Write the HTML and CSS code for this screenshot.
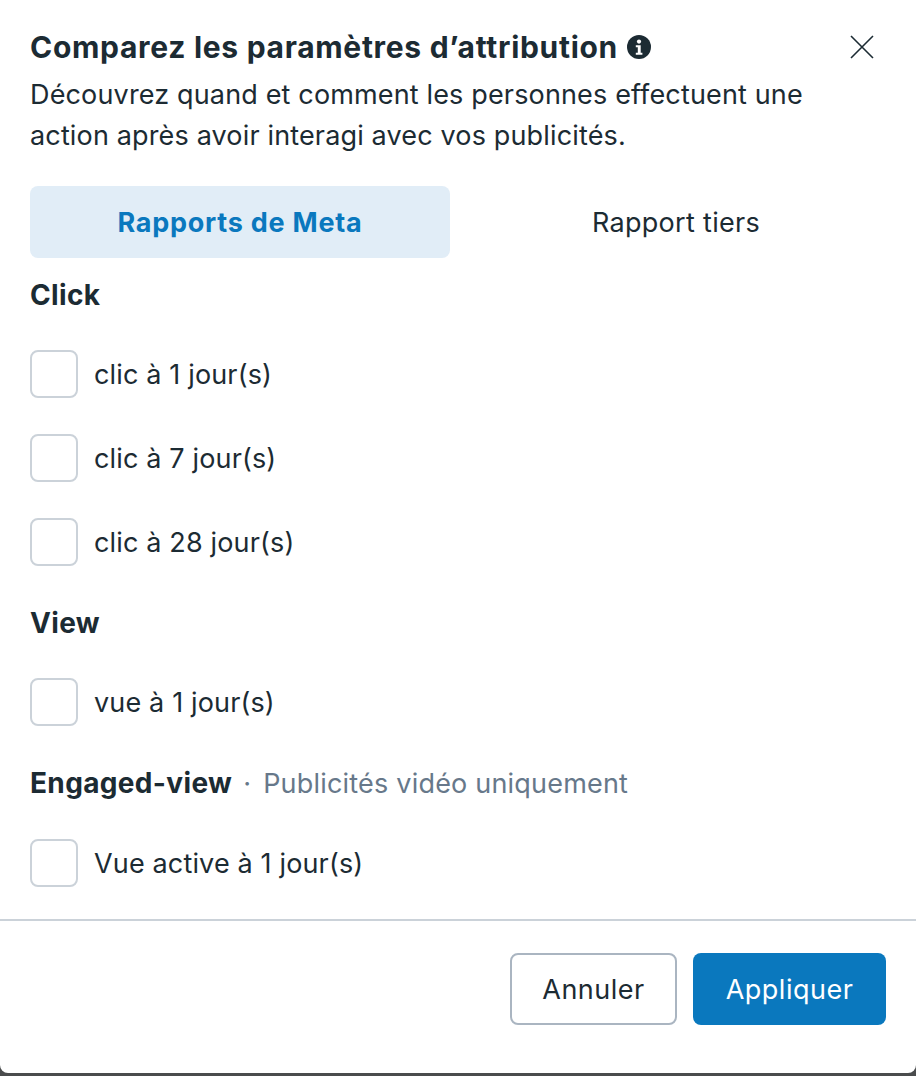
FILE: index.html
```html
<!DOCTYPE html>
<html lang="fr">
<head>
  <meta charset="UTF-8">
  <title>Comparez les paramètres d’attribution</title>
  <link rel="stylesheet" href="styles.css">
</head>
<body>
  <div class="modal">
    <div class="modal-body">
      <div class="header">
        <h1 class="title">Comparez les paramètres d’attribution
          <svg class="info" viewBox="0 0 24 24" width="24" height="24">
            <circle cx="12" cy="12" r="12" fill="#1c2b33"/>
            <circle cx="12" cy="6.6" r="2.1" fill="#fff"/>
            <path d="M8.8 10.2h4.9v7.6h1.7v2H8.8v-2h2v-5.6h-2z" fill="#fff"/>
          </svg>
        </h1>
        <button class="close" aria-label="Fermer">
          <svg viewBox="0 0 24 24" width="24" height="24">
            <path d="M1 1l22 22M23 1L1 23" stroke="#1c2b33" stroke-width="1.6" fill="none"/>
          </svg>
        </button>
      </div>
      <p class="desc">Découvrez quand et comment les personnes effectuent une action après avoir interagi avec vos publicités.</p>

      <div class="tabs">
        <div class="tab active">Rapports de Meta</div>
        <div class="tab">Rapport tiers</div>
      </div>

      <h2 class="group-title group-first">Click</h2>
      <div class="rows">
        <label class="row"><span class="box"></span>clic à 1 jour(s)</label>
        <label class="row"><span class="box"></span>clic à 7 jour(s)</label>
        <label class="row"><span class="box"></span>clic à 28 jour(s)</label>
      </div>

      <h2 class="group-title">View</h2>
      <div class="rows">
        <label class="row"><span class="box"></span>vue à 1 jour(s)</label>
      </div>

      <h2 class="group-title">Engaged-view <span class="note"><span class="dot">·</span>Publicités vidéo uniquement</span></h2>
      <div class="rows">
        <label class="row"><span class="box"></span>Vue active à 1 jour(s)</label>
      </div>
    </div>

    <div class="footer">
      <button class="btn btn-cancel">Annuler</button>
      <button class="btn btn-apply">Appliquer</button>
    </div>
  </div>
</body>
</html>
```

FILE: styles.css
```css
html, body {
  margin: 0;
  height: 1076px;
  overflow: hidden;
}
body {
  background: #4a4c4d;
  font-family: Inter, "Noto Sans", sans-serif;
  font-size: 27px;
  letter-spacing: 0.15px;
  color: #1c2b33;
}
.modal {
  background: #fff;
  height: 1073px;
  border-radius: 0 0 8px 8px;
  box-sizing: border-box;
}
.modal-body {
  padding: 26px 30px 0;
  height: 893px;
  box-sizing: border-box;
}
.header {
  display: flex;
  justify-content: space-between;
  align-items: center;
  height: 42px;
}
.title {
  margin: 0;
  font-size: 30px;
  font-weight: 700;
  line-height: 42px;
  letter-spacing: 0.7px;
  display: flex;
  align-items: center;
  gap: 9px;
}
.close {
  border: none;
  background: none;
  padding: 0;
  margin-right: 12px;
  height: 24px;
  cursor: pointer;
}
.desc {
  margin: 6px 0 0;
  line-height: 41px;
  width: 800px;
}
.tabs {
  display: flex;
  gap: 16px;
  margin-top: 30px;
}
.tab {
  flex: 1;
  height: 72px;
  display: flex;
  align-items: center;
  justify-content: center;
  border-radius: 8px;
  letter-spacing: 0.3px;
}
.tab.active {
  background: #e1edf7;
  color: #0a78be;
  font-weight: 700;
  letter-spacing: 0.75px;
}
.group-title {
  margin: 36px 0 0;
  font-size: 28px;
  font-weight: 700;
  line-height: 42px;
  letter-spacing: 0.35px;
}
.group-first {
  margin-top: 16px;
}
.note {
  font-size: 27px;
  font-weight: 400;
  letter-spacing: 0.2px;
  color: #67788a;
}
.dot {
  margin: 0 12px 0 4px;
}
.rows {
  display: flex;
  flex-direction: column;
  gap: 36px;
  margin-top: 34px;
}
.row {
  display: flex;
  align-items: center;
  gap: 16px;
  height: 48px;
}
.box {
  width: 48px;
  height: 48px;
  box-sizing: border-box;
  border: 2px solid #cbd2d9;
  border-radius: 8px;
  background: #fff;
}
.footer {
  border-top: 2px solid #cbd2d9;
  margin-top: 26px;
  display: flex;
  justify-content: flex-end;
  gap: 16px;
  padding: 32px 30px 0;
}
.btn {
  height: 72px;
  padding-top: 2px;
  border-radius: 8px;
  font-family: inherit;
  font-size: 27px;
  letter-spacing: 0.5px;
  cursor: pointer;
}
.btn-cancel {
  width: 167px;
  background: #fff;
  color: #1c2b33;
  border: 2px solid #aab5c1;
}
.btn-apply {
  width: 193px;
  background: #0a78be;
  color: #fff;
  border: none;
}
```
